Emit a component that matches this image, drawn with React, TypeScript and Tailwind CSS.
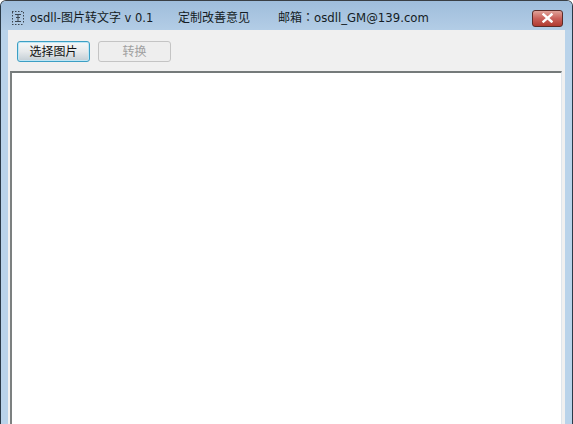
export default function App() {
  return (
    <div className="w-[573px] h-[424px] overflow-hidden flex flex-col bg-[#b9d3ea] border-x border-t border-x-[#2a3a48] border-t-[#3a3f44] rounded-t-[6px] font-['DejaVu_Sans','Noto_Sans_CJK_SC',sans-serif]">
      <div className="h-[29px] shrink-0 flex items-center pt-[5px] pl-[9px] pr-[8px] bg-gradient-to-b from-[#9fbddb] to-[#b3cde6] text-[#141c24] text-[12px]">
        <svg width="16" height="16" viewBox="0 0 16 16" className="shrink-0" fill="none" stroke="#3d4650" strokeWidth="1">
          <path d="M2 1.500h12M2 14.500h12M2.500 2v12M13.500 2v12" strokeDasharray="1.500 1.500" />
          <path d="M5 4.500h6M6 7.500h4M5 11.500h6M8 4.500v7" />
        </svg>
        <span className="ml-[4px] w-[148px] whitespace-nowrap">
          <span className="text-[11.500px]">osdll-</span>图片转文字<span className="text-[11.500px]"> v 0.1</span>
        </span>
        <span className="w-[100px] whitespace-nowrap">定制改善意见</span>
        <span className="whitespace-nowrap">
          邮箱<span className="font-['Noto_Sans_CJK_TC',sans-serif]">：</span><span className="text-[11.700px]">osdll_GM@139.com</span>
        </span>
        <div className="ml-auto mr-[1px] flex h-[17px] w-[31px] items-center justify-center rounded-[3px] border border-[#5b2b28] bg-gradient-to-b from-[#dfa299] via-[#c9605a] to-[#b03a30]">
          <svg width="13" height="10" viewBox="0 0 13 10">
            <path d="M2.500 1.500L10.500 8.500M10.500 1.500L2.500 8.500" stroke="#ffffff" strokeWidth="2.400" strokeLinecap="square" />
          </svg>
        </div>
      </div>
      <div className="flex-1 mx-[7px] bg-[#f0f0f0] flex flex-col pl-[2px] pr-[3px] min-h-0">
        <div className="h-[41px] shrink-0 flex items-start pt-[11px] gap-[8px] pl-[7px]">
          <button className="w-[73px] h-[21px] pt-[1px] rounded-[3px] border border-[#3c9fc4] bg-gradient-to-b from-[#f4f7f9] via-[#e6e9eb] to-[#c3ced5] text-[12px] text-[#111] shadow-[inset_0_0_0_1px_#bfe6f5]">选择图片</button>
          <button className="w-[73px] h-[21px] pt-[1px] rounded-[3px] border border-[#c4c4c4] bg-[#eeeeee] text-[12px] text-[#a0a0a0]">转换</button>
        </div>
        <div className="flex-1 bg-white border-t-2 border-l-2 border-t-[#757a7a] border-l-[#7c8080] border-r border-r-[#dfe6ec]" />
      </div>
    </div>
  );
}
